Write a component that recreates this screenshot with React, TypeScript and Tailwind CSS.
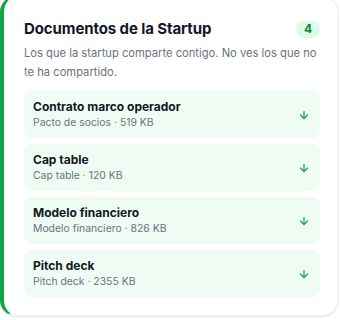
import React from "react";
import { ArrowDown } from "lucide-react";

const docs = [
  { name: "Contrato marco operador", type: "Pacto de socios", size: "519 KB" },
  { name: "Cap table", type: "Cap table", size: "120 KB" },
  { name: "Modelo financiero", type: "Modelo financiero", size: "826 KB" },
  { name: "Pitch deck", type: "Pitch deck", size: "2355 KB" },
];

const DocRow = ({ name, type, size }: { name: string; type: string; size: string }) => (
  <div className="flex items-center justify-between rounded-lg bg-[#effcf3] pl-[9px] pr-[10px] py-[7px]">
    <div>
      <p className="text-[12px] leading-[17px] font-bold text-[#111827]">{name}</p>
      <p className="text-[10.4px] leading-4 text-[#6b7280]">
        {type} · {size}
      </p>
    </div>
    <ArrowDown size={12} strokeWidth={2.5} className="text-[#22a34f]" />
  </div>
);

const App = () => {
  return (
    <div className="w-[340px] h-[320px] overflow-hidden bg-white" style={{ fontFamily: "Inter, 'Noto Sans', sans-serif" }}>
      <div className="-mt-1 w-[338px] h-[320px] rounded-2xl border border-gray-100 border-l-4 border-l-[#16a34a] bg-white shadow pt-5 pl-5 pr-[17px] pb-[18px]">
        <div className="flex items-center justify-between h-6">
          <h2 className="text-[15px] font-bold text-[#111827] tracking-[-0.1px]">Documentos de la Startup</h2>
          <span className="flex items-center justify-center h-[17px] w-6 rounded-full bg-[#dcfce7] text-[12px] font-bold text-[#15803d]">
            4
          </span>
        </div>
        <p className="mt-[3px] text-[11.2px] leading-[19px] text-[#6b7280]">
          Los que la startup comparte contigo. No ves los que no te ha compartido.
        </p>
        <div className="mt-[9px] flex flex-col gap-[6px]">
          {docs.map((d) => (
            <DocRow key={d.name} {...d} />
          ))}
        </div>
      </div>
    </div>
  );
};

export default App;
